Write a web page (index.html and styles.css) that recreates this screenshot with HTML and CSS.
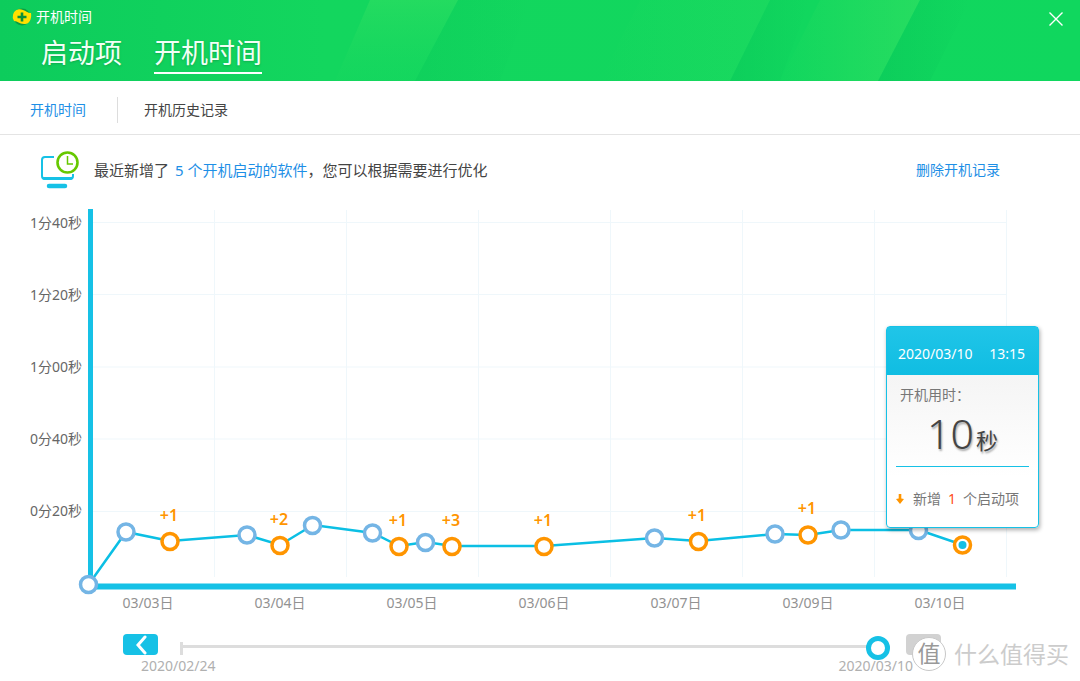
FILE: index.html
```html
<!DOCTYPE html>
<html lang="zh-CN">
<head>
<meta charset="utf-8">
<meta name="viewport" content="width=device-width, initial-scale=1">
<title>开机时间</title>
<link rel="stylesheet" href="styles.css">
</head>
<body>
<header class="header">
  <svg class="header-art" viewBox="0 0 1080 81" preserveAspectRatio="none" aria-hidden="true">
    <defs>
      <linearGradient id="beam" x1="0" y1="0" x2="0" y2="1">
        <stop offset="0" stop-color="#35e062" stop-opacity=".5"/>
        <stop offset="1" stop-color="#20da60" stop-opacity=".1"/>
      </linearGradient>
      <linearGradient id="beam-side" x1="0" y1="0" x2="1" y2="0">
        <stop offset="0" stop-color="#35e062" stop-opacity="0"/>
        <stop offset="1" stop-color="#35e062" stop-opacity=".6"/>
      </linearGradient>
      <linearGradient id="shade" x1="0" y1="0" x2="1" y2="0">
        <stop offset="0" stop-color="#08c458" stop-opacity=".6"/>
        <stop offset="1" stop-color="#08c458" stop-opacity="0"/>
      </linearGradient>
    </defs>
    <path d="M370 0H458L415 81H335Z" fill="url(#beam)"/>
    <path d="M458 0H530L500 81H415Z" fill="url(#shade)" opacity=".5"/>
    <path d="M640 0H770L730 81H600Z" fill="url(#beam-side)" opacity=".4"/>
    <path d="M770 0H810L780 81H730Z" fill="url(#shade)" opacity=".7"/>
    <path d="M820 0H920L878 81H780Z" fill="url(#beam-side)"/>
    <path d="M920 0H970L930 81H878Z" fill="url(#shade)" opacity=".8"/>
  </svg>
  <div class="titlebar">
    <svg class="logo" viewBox="0 0 20 20" aria-hidden="true">
      <circle cx="10" cy="10" r="8.500" fill="#0a9c42"/>
      <path d="M1 8C2 3 7 1 11 3C15 4 15 6 19 6C20 12 17 18 12 17C7 17 6 14 2 14Q0 11 1 8Z" fill="#ffe000"/>
      <path d="M10 5.500V14.500M5.500 10H14.500" stroke="#0a8f3a" stroke-width="2.600"/>
    </svg>
    <h1 class="title">开机时间</h1>
    <button class="close" type="button" aria-label="关闭">
      <svg viewBox="0 0 14 14" aria-hidden="true"><path d="M.5.5L13.5 13.5M13.5.5L.5 13.5"/></svg>
    </button>
  </div>
  <nav class="main-tabs">
    <a class="main-tab" href="#startup">启动项</a>
    <a class="main-tab main-tab-active" href="#time">开机时间</a>
  </nav>
</header>

<nav class="sub-tabs">
  <a class="sub-tab sub-tab-active" href="#time">开机时间</a>
  <a class="sub-tab" href="#history">开机历史记录</a>
</nav>

<main>
  <section class="notice">
    <svg class="notice-icon" viewBox="0 0 40 40" aria-hidden="true">
      <path d="M14 7H5Q2 7 2 10V26Q2 29 5 29H30Q33 29 33 26V24" fill="none" stroke="#16c1e6" stroke-width="2"/>
      <path d="M2 27Q2 30 5 30H30Q33 30 33 27Z" fill="#16c1e6"/>
      <path d="M9 36H25" stroke="#16c1e6" stroke-width="4.500" stroke-linecap="round"/>
      <circle cx="27.500" cy="12.500" r="10" fill="#fff" stroke="#66c800" stroke-width="2.600"/>
      <path d="M27.500 6V14H33" fill="none" stroke="#66c800" stroke-width="1.500"/>
    </svg>
    <p class="notice-text">最近新增了 <a class="link" href="#startup">5 个开机启动的软件</a>，您可以根据需要进行优化</p>
    <button class="clear" type="button">删除开机记录</button>
  </section>

  <section class="chart">
    <svg class="plot" viewBox="0 205 1080 410" role="img" aria-label="开机时间折线图">
      <g class="grid">
        <path d="M93 222.500H1007M93 294.500H1007M93 367H1007M93 439H1007M93 511.500H1007"/>
        <path d="M214.500 210V577M346.500 210V577M478.500 210V577M610.500 210V577M742.500 210V577M874.500 210V577M1006.500 210V577"/>
      </g>
      <path class="axis" d="M90.500 209V586"/>
      <path class="axis axis-x" d="M90 586.500H1016"/>
      <g class="y-labels">
        <text x="82" y="228">1分40秒</text>
        <text x="82" y="300">1分20秒</text>
        <text x="82" y="372">1分00秒</text>
        <text x="82" y="444">0分40秒</text>
        <text x="82" y="516">0分20秒</text>
      </g>
      <g class="x-labels">
        <text x="148" y="608">03/03日</text>
        <text x="280" y="608">03/04日</text>
        <text x="412" y="608">03/05日</text>
        <text x="544" y="608">03/06日</text>
        <text x="676" y="608">03/07日</text>
        <text x="808" y="608">03/09日</text>
        <text x="940" y="608">03/10日</text>
      </g>
      <polyline class="line" points="89,584 126,532 170,541 247,535 280,545 313,525 373,533 399,546 426,542 452,546 544,546 655,538 698,541 775,534 808,535 841,530 919,530 963,545"/>
      <g class="node">
        <circle cx="88.500" cy="584.500" r="8"/>
        <circle cx="126" cy="532" r="8"/>
        <circle cx="247" cy="535" r="8"/>
        <circle cx="312.500" cy="525.500" r="8"/>
        <circle cx="372.500" cy="533" r="8"/>
        <circle cx="425.500" cy="542.500" r="8"/>
        <circle cx="654.500" cy="538" r="8"/>
        <circle cx="775" cy="534" r="8"/>
        <circle cx="841" cy="530" r="8"/>
        <circle cx="918.500" cy="530.500" r="8"/>
      </g>
      <g class="node node-added">
        <circle cx="170" cy="541.500" r="8"/>
        <circle cx="280" cy="545.500" r="8"/>
        <circle cx="399" cy="546.500" r="8"/>
        <circle cx="452" cy="546.500" r="8"/>
        <circle cx="544" cy="546.500" r="8"/>
        <circle cx="698.500" cy="541.500" r="8"/>
        <circle cx="808" cy="535" r="8"/>
        <circle cx="962.500" cy="545" r="8"/>
      </g>
      <circle cx="962.500" cy="545" r="4" fill="#12bfe5"/>
      <g class="counts">
        <text x="169" y="521">+1</text>
        <text x="279" y="525">+2</text>
        <text x="398" y="526">+1</text>
        <text x="451" y="526">+3</text>
        <text x="543" y="526">+1</text>
        <text x="697" y="521">+1</text>
        <text x="807" y="514">+1</text>
      </g>
    </svg>
    <aside class="tip">
      <div class="tip-head"><span>2020/03/10</span><span>13:15</span></div>
      <div class="tip-body">
        <p class="tip-label">开机用时：</p>
        <p class="tip-value">10<span class="tip-unit">秒</span></p>
        <p class="tip-added">
          <svg class="tip-arrow" viewBox="0 0 8 10" aria-hidden="true"><path d="M2.700 0H5.300V4.500L8 5L4 10L0 5L2.700 4.500Z" fill="#ff9500"/></svg>
          <span>新增</span><span class="tip-count">1</span><span>个启动项</span>
        </p>
      </div>
    </aside>
  </section>

  <section class="timeline">
    <div class="timeline-row">
      <button class="step" type="button" aria-label="更早">
        <svg viewBox="0 0 12 20" aria-hidden="true"><path d="M10 2L3 10L10 18"/></svg>
      </button>
      <input class="range" type="range" min="0" max="100" value="100" aria-label="日期">
      <button class="step step-off" type="button" aria-label="更晚" disabled></button>
    </div>
    <div class="timeline-dates"><span>2020/02/24</span><span>2020/03/10</span></div>
  </section>
</main>

<div class="mark"><span class="mark-badge">值</span><span>什么值得买</span></div>
</body>
</html>
```
FILE: styles.css
```css
* {
  box-sizing: border-box;
}

body {
  margin: 0;
  position: relative;
  min-height: 100vh;
  background: #fff;
  color: #444;
  font: 14px/20px "Noto Sans", "Noto Sans CJK SC", sans-serif;
}

h1, p {
  margin: 0;
  font-weight: inherit;
}

a {
  color: inherit;
  text-decoration: none;
}

button {
  padding: 0;
  border: 0;
  background: none;
  font: inherit;
  cursor: pointer;
}

.header {
  position: relative;
  height: 81px;
  background: linear-gradient(90deg, #0dcc5c, #13d65e 30%, #10d75e);
  color: #fff;
}

.header-art {
  position: absolute;
  inset: 0;
  width: 100%;
  height: 100%;
}

.titlebar {
  position: relative;
  display: flex;
  align-items: center;
  gap: 4px;
  height: 34px;
  padding: 0 16px 0 12px;
}

.logo {
  width: 20px;
  height: 20px;
}

.title {
  font-size: 14px;
}

.close {
  display: flex;
  margin-left: auto;
  padding: 4px 1px 0;
}

.close svg {
  width: 14px;
  height: 14px;
  stroke: #fff;
  stroke-width: 1.4;
}

.main-tabs {
  position: relative;
  display: flex;
  gap: 32px;
  padding-left: 41px;
}

.main-tab {
  height: 40px;
  border-bottom: 2px solid transparent;
  color: #f2fff6;
  font-size: 27px;
  line-height: 38px;
  text-shadow: 0 1px 2px #0a8a3e80;
}

.main-tab-active {
  border-color: #fff;
}

.sub-tabs {
  display: flex;
  align-items: center;
  height: 54px;
  padding: 4px 30px 0;
  border-bottom: 1px solid #e4e4e4;
}

.sub-tab + .sub-tab {
  margin-left: 31px;
  padding-left: 26px;
  border-left: 1px solid #ddd;
  line-height: 26px;
}

.sub-tab-active, .link, .clear {
  color: #1e8fe6;
}

.notice {
  display: flex;
  align-items: center;
  height: 70px;
  padding: 0 80px 0 40px;
}

.notice-icon {
  width: 40px;
  height: 40px;
  margin-right: 14px;
}

.notice-text {
  font-size: 15px;
}

.link {
  margin-left: 2px;
}

.clear {
  margin-left: auto;
}

.chart {
  position: relative;
}

.plot {
  display: block;
  width: 100%;
  font-size: 14px;
}

.grid {
  fill: none;
  stroke: #eff7fb;
}

.axis {
  stroke: #16c1e6;
  stroke-width: 5;
}

.axis-x {
  stroke-width: 6;
}

.line {
  fill: none;
  stroke: #0bbfe4;
  stroke-width: 2.5;
}

.node {
  fill: #fff;
  stroke: #74b5e5;
  stroke-width: 3.5;
}

.node-added {
  stroke: #ff9500;
}

.y-labels {
  fill: #666;
  text-anchor: end;
}

.x-labels {
  fill: #929292;
  text-anchor: middle;
}

.counts {
  fill: #ff9500;
  font-size: 16px;
  font-weight: 600;
  text-anchor: middle;
}

.tip {
  position: absolute;
  top: 121px;
  right: 41px;
  width: 153px;
  border: 1px solid #16c1e6;
  border-radius: 4px;
  background: linear-gradient(#f0f0f0, #fff 75%);
  box-shadow: 1px 2px 4px #0005;
}

.tip-head {
  display: flex;
  justify-content: space-between;
  padding: 17px 13px 11px 11px;
  background: linear-gradient(#20c5e8, #10bde2);
  color: #fff;
}

.tip-body {
  padding: 10px 9px 18px;
}

.tip-label {
  padding-left: 4px;
  color: #777;
}

.tip-value {
  height: 62px;
  border-bottom: 1px solid #16c1e6;
  font-size: 41px;
  font-weight: 300;
  line-height: 56px;
  text-align: center;
  text-shadow: 1px 2px 2px #0005;
}

.tip-unit {
  margin-left: 2px;
  font-size: 22px;
  font-weight: 400;
}

.tip-added {
  display: flex;
  align-items: center;
  padding-top: 22px;
  color: #777;
  white-space: nowrap;
}

.tip-arrow {
  width: 8px;
  height: 10px;
  margin-right: 9px;
}

.tip-count {
  margin: 0 7px;
  color: #ff4a20;
}

.timeline {
  padding: 19px 139px 0 123px;
}

.timeline-row {
  display: flex;
  align-items: flex-start;
  height: 22px;
}

.step {
  display: flex;
  align-items: center;
  justify-content: center;
  width: 35px;
  height: 21px;
  border-radius: 4px;
  background: #16c1e6;
}

.step svg {
  width: 12px;
  height: 20px;
  fill: none;
  stroke: #fff;
  stroke-width: 3;
  stroke-linecap: round;
}

.step-off {
  background: #d2d2d2;
}

.range {
  flex: 1;
  min-width: 0;
  height: 24px;
  margin: 2px 16px 0 22px;
  appearance: none;
  background:
    linear-gradient(#ddd, #ddd) 0 50% / 3px 13px no-repeat,
    linear-gradient(#ddd, #ddd) 0 45% / 97% 3px no-repeat;
}

.range::-webkit-slider-thumb {
  appearance: none;
  width: 24px;
  height: 24px;
  border: 5px solid #16c1e6;
  border-radius: 50%;
  background: #fff;
}

.timeline-dates {
  display: flex;
  justify-content: space-between;
  padding: 0 28px 0 18px;
  color: #b0b0b0;
}

.mark {
  position: absolute;
  right: 11px;
  bottom: 10px;
  display: flex;
  align-items: center;
  gap: 8px;
  color: #ccc;
  font-size: 23px;
  line-height: 34px;
}

.mark-badge {
  width: 34px;
  height: 34px;
  border: 1px solid #c8c8c8;
  border-radius: 50%;
  background: #fff;
  color: #999;
  line-height: 30px;
  text-align: center;
}
```
